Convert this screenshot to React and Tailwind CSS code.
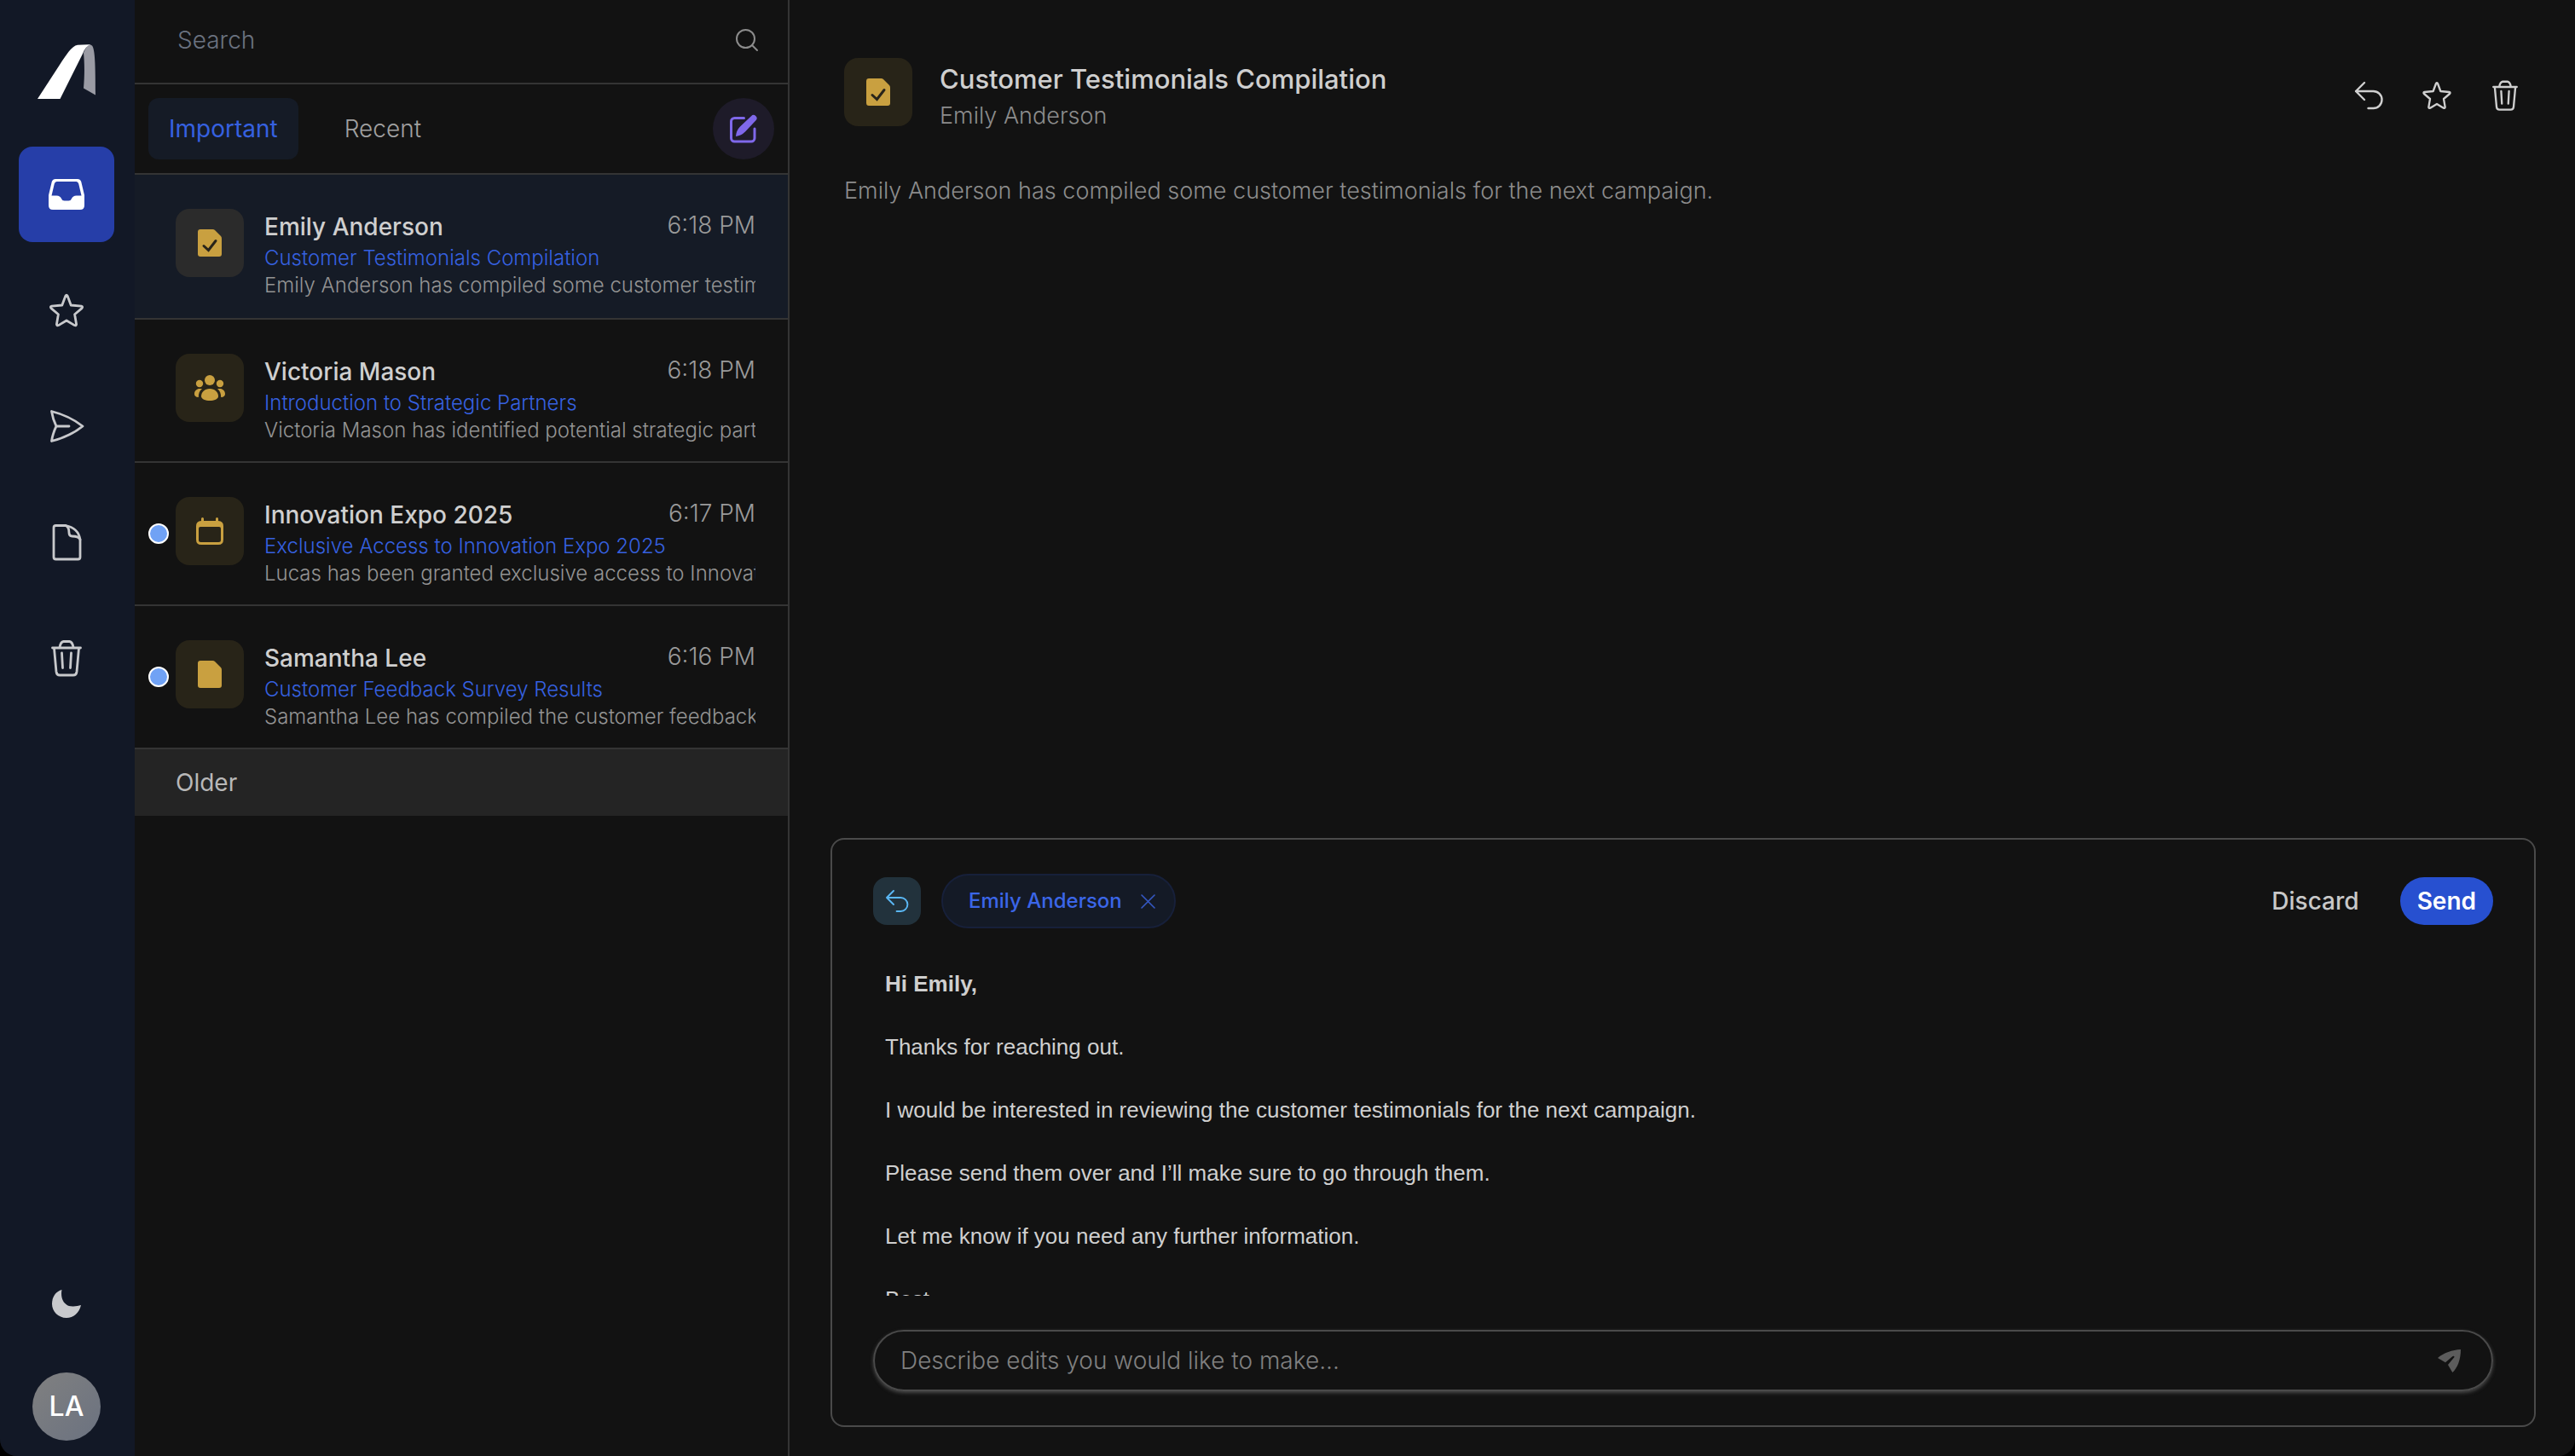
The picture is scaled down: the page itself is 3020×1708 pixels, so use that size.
import { useState } from 'react';

const StarIcon = ({ className }) => (
  <svg className={className} viewBox="0 0 48 48" fill="none" stroke="currentColor" strokeWidth="2.8" strokeLinejoin="round" strokeLinecap="round">
    <path d="M22.8 7.2Q24 5.2 25.2 7.2L29.2 18 41.4 19.2Q43.6 19.8 42 21.6L33.6 28.8 35.6 40.4Q35.4 42.6 33.4 41.6L24 36 14.6 41.6Q12.6 42.6 12.4 40.4L14.4 28.8 6 21.6Q4.4 19.8 6.6 19.2L18.8 18Z" />
  </svg>
);

const TrashIcon = ({ className }) => (
  <svg className={className} viewBox="0 0 48 48" fill="none" stroke="currentColor" strokeWidth="2.8" strokeLinejoin="round" strokeLinecap="round">
    <path d="M7.5 12H40.5" />
    <path d="M16 11.5Q17 5 20.5 4.5H27.5Q31 5 32 11.5" />
    <path d="M9.5 12.5L12 40Q12.5 44 16 44H32Q35.5 44 36 40L38.5 12.5" />
    <path d="M18.5 18L19.5 35.5M29.5 18L28.5 35.5" />
  </svg>
);

const ReplyIcon = ({ className }) => (
  <svg className={className} viewBox="0 0 40 40" fill="none" stroke="currentColor" strokeWidth="2.4" strokeLinejoin="round" strokeLinecap="round">
    <path d="M15 5L5 15l10 10M5 15h20.5a10 10 0 0 1 0 20h-6" />
  </svg>
);

const InboxIcon = ({ className }) => (
  <svg className={className} viewBox="0 0 48 48" fill="currentColor" fillRule="evenodd">
    <path d="M11 6H37Q40 6 41.2 9L45 25V37Q45 42 40 42H8Q3 42 3 37V25L6.8 9Q8 6 11 6ZM12.5 9Q10.5 9 9.8 11.5L6.5 25.5H12.5Q16.5 25.5 18 29Q19 31.5 21.5 31.5H26.5Q29 31.5 30 29Q31.5 25.5 35.5 25.5H41.5L38.2 11.5Q37.5 9 35.5 9Z" />
  </svg>
);

const SendIcon = ({ className }) => (
  <svg className={className} viewBox="0 0 48 48" fill="none" stroke="currentColor" strokeWidth="2.8" strokeLinejoin="round" strokeLinecap="round">
    <path d="M6.5 6.5Q28 12 43 24Q28 36 6.5 41.5Q8 32 12 24Q8 16 6.5 6.5ZM12 24H27" />
  </svg>
);

const FileIcon = ({ className }) => (
  <svg className={className} viewBox="0 0 48 48" fill="none" stroke="currentColor" strokeWidth="2.8" strokeLinejoin="round" strokeLinecap="round">
    <path d="M23 4.5H11.5Q9 4.5 9 7V41.5Q9 44 11.5 44H37.5Q40 44 40 41.5V21Q38 7.5 23 4.5Z" />
    <path d="M23 4.5Q27 6 27 13Q27 17 30.5 17Q38.5 17 40 21" />
  </svg>
);

const MoonIcon = ({ className }) => (
  <svg className={className} viewBox="0 0 34 33" fill="currentColor">
    <path d="M11.5 0C9.5 10 14 20 25 19.5Q30 19.3 34 18C32 27 25 33 17 33C7 33 0 25 0 16.5C0 9 4 2 11.5 0Z" />
  </svg>
);

const ComposeIcon = ({ className }) => (
  <svg className={className} viewBox="0 0 40 40">
    <path d="M20.5 7.5H9.5a4 4 0 0 0-4 4v19.5a4 4 0 0 0 4 4h19.5a4 4 0 0 0 4-4V20" fill="none" stroke="currentColor" strokeWidth="3" strokeLinecap="round" />
    <path d="M11 29Q11.5 22 16 17.5L29 5.2a3.7 3.7 0 0 1 5.5 5L22 23.5Q17.5 28 11 29Z" fill="currentColor" />
  </svg>
);

const PlaneIcon = ({ className }) => (
  <svg className={className} viewBox="0 0 27 27" fill="currentColor">
    <path d="M27 0C17 .5 7 4 0 10L9 15.3L17.5 8Q19.5 7 19.5 9L12 18L17.3 27C23 22 27 12 27 0Z" />
  </svg>
);

const DocIcon = ({ checked }) => (
  <svg className="h-8 w-7" viewBox="0 0 28 32">
    <path d="M3 0H17.5Q19 0 20 1L27 8Q28 9 28 10.5V29Q28 32 25 32H3Q0 32 0 29V3Q0 0 3 0Z" fill="currentColor" />
    {checked && <path d="M7 19.5L12.5 24.5L21 13.5" fill="none" stroke="#28241a" strokeWidth="3" strokeLinecap="round" />}
  </svg>
);

const PeopleIcon = () => (
  <svg className="h-[30px] w-9" viewBox="0 0 36 30" fill="currentColor">
    <circle cx="18" cy="6" r="6" />
    <circle cx="6" cy="10" r="4.2" />
    <circle cx="30" cy="10" r="4.2" />
    <path d="M18 16c6 0 10 4 10 9 0 3-5 5-10 5s-10-2-10-5c0-5 4-9 10-9z" />
    <path d="M0 22c0-3.5 3-6 6-6h3c-3 2.5-4.2 5.5-4.2 10C1.500 25.800 0 24.500 0 22z" />
    <path d="M36 22c0-3.5-3-6-6-6h-3c3 2.5 4.2 5.5 4.2 10C34.500 25.800 36 24.500 36 22z" />
  </svg>
);

const CalendarIcon = () => (
  <svg className="h-8 w-8" viewBox="0 0 32 32" fill="currentColor" fillRule="evenodd">
    <path d="M6 4V1.5a1.4 1.4 0 0 1 3 0V4H23V1.5a1.4 1.4 0 0 1 3 0V4Q32 4.500 32 10V26Q32 32 26 32H6Q0 32 0 26V10Q0 4.500 6 4ZM5 11Q3 11 3 13V26.500Q3 29 5.500 29H26.500Q29 29 29 26.500V13Q29 11 27 11Z" />
  </svg>
);

const navItems = [
  { label: 'Inbox', Icon: InboxIcon, active: true },
  { label: 'Starred', Icon: StarIcon },
  { label: 'Sent', Icon: SendIcon },
  { label: 'Drafts', Icon: FileIcon },
  { label: 'Trash', Icon: TrashIcon },
];

const mails = [
  {
    sender: 'Emily Anderson',
    time: '6:18 PM',
    subject: 'Customer Testimonials Compilation',
    preview: 'Emily Anderson has compiled some customer testimonials for the next campaign.',
    icon: <DocIcon checked />,
    selected: true,
  },
  {
    sender: 'Victoria Mason',
    time: '6:18 PM',
    subject: 'Introduction to Strategic Partners',
    preview: 'Victoria Mason has identified potential strategic partners.',
    icon: <PeopleIcon />,
  },
  {
    sender: 'Innovation Expo 2025',
    time: '6:17 PM',
    subject: 'Exclusive Access to Innovation Expo 2025',
    preview: 'Lucas has been granted exclusive access to Innovation Expo 2025.',
    icon: <CalendarIcon />,
    unread: true,
  },
  {
    sender: 'Samantha Lee',
    time: '6:16 PM',
    subject: 'Customer Feedback Survey Results',
    preview: 'Samantha Lee has compiled the customer feedback survey results.',
    icon: <DocIcon />,
    unread: true,
  },
];

const reply = [
  'Thanks for reaching out.',
  'I would be interested in reviewing the customer testimonials for the next campaign.',
  'Please send them over and I’ll make sure to go through them.',
  'Let me know if you need any further information.',
  'Best,',
];

function Sidebar() {
  return (
    <nav className="flex w-[158px] shrink-0 flex-col items-center border-r-2 border-[#121826] bg-[#121826] pt-[52px] pb-[18px] text-[#c8c9cc]">
      <svg className="h-16 w-[68px]" viewBox="0 0 68 64" role="img" aria-label="Logo">
        <path d="M54 10C57 2 61 -1 64 1.5C67.5 6 68 24 68 59.5L54 51.5C55.5 34 55 20 54 10Z" fill="#9a9ba4" />
        <path d="M0 64L26 24C34 12 40 2 47 .8Q54 0 63 .2C58 1 55 6 53 11L26.5 64Z" fill="#fff" />
      </svg>
      <div className="mt-14 flex flex-col gap-6">
        {navItems.map(({ label, Icon, active }) => (
          <button
            key={label}
            aria-label={label}
            className={`flex h-28 w-28 items-center justify-center rounded-2xl ${active ? 'bg-[#263ea8] text-white' : ''}`}
          >
            <Icon className="h-12 w-12" />
          </button>
        ))}
      </div>
      <button aria-label="Toggle dark mode" className="mt-auto mb-16">
        <MoonIcon className="h-[33px] w-[34px]" />
      </button>
      <button className="flex h-20 w-20 items-center justify-center rounded-full bg-linear-to-br from-[#808080] to-[#6b7280] text-[32px] font-medium text-white">
        LA
      </button>
    </nav>
  );
}

function MailRow({ mail }) {
  return (
    <li className={`relative flex border-b-2 border-[#343434] pt-10 pr-[38px] pl-12 ${mail.selected ? 'bg-[#151b26] pb-[22px]' : 'pb-5'}`}>
      {mail.unread && (
        <span className="absolute top-1/2 left-4 h-6 w-6 -translate-y-1/2 rounded-full border-2 border-white bg-[#70a2f5]" />
      )}
      <div className={`flex h-20 w-20 shrink-0 items-center justify-center rounded-2xl text-[#c9a040] ${mail.selected ? 'bg-[#2b2b2b]' : 'bg-[#282418]'}`}>
        {mail.icon}
      </div>
      <div className="ml-6 min-w-0 flex-1">
        <div className="flex items-start justify-between">
          <h3 className="text-[28px] leading-[42px] font-medium text-[#cfcfcf]">{mail.sender}</h3>
          <span className="text-[28px] leading-[38px] font-light text-[#9a9a9a]">{mail.time}</span>
        </div>
        <p className="overflow-hidden text-2xl leading-8 font-light whitespace-nowrap text-[#3661e0]">{mail.subject}</p>
        <p className="overflow-hidden text-2xl leading-8 font-light whitespace-nowrap text-[#949494]">{mail.preview}</p>
      </div>
    </li>
  );
}

function MailList() {
  const [tab, setTab] = useState('Important');

  return (
    <section className="flex w-[768px] shrink-0 flex-col border-r-2 border-[#343434]">
      <label className="flex h-[99px] items-center border-b-2 border-[#343434] pr-[34px] pb-1 pl-[50px]">
        <input
          type="search"
          aria-label="Search"
          placeholder="Search"
          className="min-w-0 flex-1 bg-transparent text-[28px] font-light text-[#cfcfcf] outline-none placeholder:text-[#6b7280]"
        />
        <svg className="h-7 w-7 text-[#8c8c8c]" viewBox="0 0 28 28" fill="none" stroke="currentColor" strokeWidth="2" strokeLinecap="round">
          <circle cx="12.5" cy="12.5" r="10.5" />
          <path d="M20 20L26 26" />
        </svg>
      </label>
      <div className="flex items-center border-b-2 border-[#343434] px-4 py-4">
        <div className="flex flex-1 gap-[30px]">
          {['Important', 'Recent'].map((name) => (
            <button
              key={name}
              onClick={() => setTab(name)}
              className={`h-18 rounded-xl px-6 text-[28px] ${tab === name ? 'bg-[#151b26] text-[#3661e0]' : 'font-light text-[#a0a0a0]'}`}
            >
              {name}
            </button>
          ))}
        </div>
        <button aria-label="Compose" className="flex h-18 w-18 items-center justify-center rounded-full bg-[#1e1b29] text-[#7f68ea]">
          <ComposeIcon className="h-10 w-10" />
        </button>
      </div>
      <ul>
        {mails.map((mail) => (
          <MailRow key={mail.sender} mail={mail} />
        ))}
      </ul>
      <h2 className="bg-[#242424] px-12 py-[19px] text-[28px] leading-10 text-[#b8b8b8]">Older</h2>
    </section>
  );
}

function Composer() {
  return (
    <section className="mt-auto mr-[46px] mb-[34px] ml-12 rounded-2xl border-2 border-[#4a4a4a] px-12 py-10">
      <div className="flex items-center">
        <button aria-label="Reply options" className="flex h-14 w-14 items-center justify-center rounded-2xl bg-[#22323c] text-[#5bb8f5]">
          <ReplyIcon className="h-8 w-8" />
        </button>
        <span className="ml-6 flex h-16 items-center gap-[22px] rounded-full border-2 border-[#17203a] bg-[#141a26] px-[30px] pr-[22px] text-2xl font-medium text-[#3b66e8]">
          Emily Anderson
          <button aria-label="Remove Emily Anderson">
            <svg className="h-[17px] w-[17px]" viewBox="0 0 17 17" stroke="#3558c4" strokeWidth="1.6" strokeLinecap="round">
              <path d="M1 1L16 16M16 1L1 16" />
            </svg>
          </button>
        </span>
        <button className="ml-auto text-[28px] font-medium text-[#c8c8c8]">Discard</button>
        <button className="ml-12 h-14 rounded-full bg-[#2750d0] px-5 text-[28px] font-semibold text-white">Send</button>
      </div>

      <div className="mt-[47px] flex h-[384px] flex-col gap-[37px] overflow-hidden px-3.5 font-['Liberation_Sans',Arial,sans-serif] text-[26px] leading-[37px] text-[#cfcfcf]">
        <p className="font-bold">Hi Emily,</p>
        {reply.map((line) => (
          <p key={line}>{line}</p>
        ))}
      </div>

      <form className="mt-10 flex h-18 items-center rounded-full border-2 border-[#4a4a4a] pr-9 pl-[30px] shadow-[0_2px_4px_#4a4a4a]">
        <input
          aria-label="Describe edits"
          placeholder="Describe edits you would like to make..."
          className="min-w-0 flex-1 bg-transparent text-[28px] font-light text-[#cfcfcf] outline-none placeholder:text-[#808080]"
        />
        <button type="button" aria-label="Apply edits" className="text-[#5c5c5c]">
          <PlaneIcon className="h-[27px] w-[27px]" />
        </button>
      </form>
    </section>
  );
}

export default function App() {
  return (
    <div className="h-screen bg-black">
      <div className="flex h-full overflow-hidden rounded-b-[20px] bg-[#121212] font-['Inter',sans-serif]">
        <Sidebar />
        <MailList />
        <main className="flex min-w-0 flex-1 flex-col">
          <header className="flex items-start pt-[68px] pr-[62px] pl-16">
            <div className="flex h-20 w-20 shrink-0 items-center justify-center rounded-2xl bg-[#282418] text-[#c9a040]">
              <DocIcon checked />
            </div>
            <div className="ml-8 pt-0.5">
              <h1 className="text-[31px] leading-[46px] font-medium text-[#cfcfcf]">Customer Testimonials Compilation</h1>
              <p className="text-[27px] leading-10 font-light text-[#8c8c8c]">Emily Anderson</p>
            </div>
            <div className="ml-auto flex h-[88px] items-center gap-10 text-[#cfcfcf]">
              <button aria-label="Reply"><ReplyIcon className="h-10 w-10" /></button>
              <button aria-label="Star"><StarIcon className="h-10 w-10" /></button>
              <button aria-label="Delete"><TrashIcon className="h-10 w-10" /></button>
            </div>
          </header>
          <p className="mt-12 px-16 text-[27px] leading-10 font-light text-[#8c8c8c]">
            Emily Anderson has compiled some customer testimonials for the next campaign.
          </p>
          <Composer />
        </main>
      </div>
    </div>
  );
}
